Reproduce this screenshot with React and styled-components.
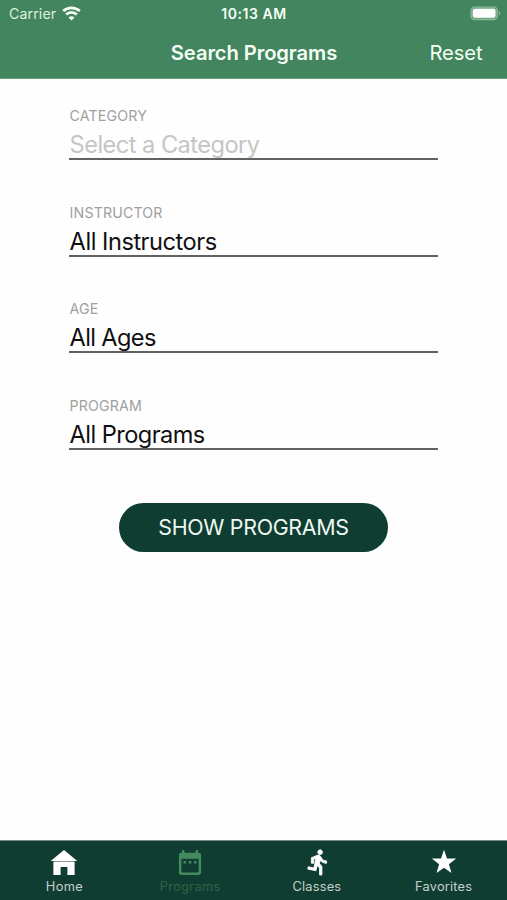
import React from "react";
import styled, { createGlobalStyle } from "styled-components";

const GlobalStyle = createGlobalStyle`
  * { box-sizing: border-box; }
  body { margin: 0; background: #fff; }
`;

const Screen = styled.div`
  width: 100%;
  height: 100vh;
  display: flex;
  flex-direction: column;
  overflow: hidden;
  background: #fefefe;
  font-family: Inter, "Liberation Sans", sans-serif;
  white-space: nowrap;
`;

const Header = styled.header`
  height: 79px;
  flex: none;
  background: #43855e;
  border-bottom: 1px solid #68a07c;
  color: #f3fff4;
`;

const StatusBar = styled.div`
  height: 27px;
  display: grid;
  grid-template-columns: 1fr auto 1fr;
  align-items: center;
  padding: 0 6px 0 9px;
  font-size: 14.2px;
`;

const Carrier = styled.div`
  display: flex;
  align-items: center;
  gap: 6px;
  letter-spacing: 0.1px;
  color: #dcf2df;
`;

const Clock = styled.div`
  margin-right: 2px;
  font-size: 14px;
  font-weight: 600;
  letter-spacing: 0.55px;
`;

const BatterySlot = styled.div`
  display: flex;
  justify-content: flex-end;
`;

const NavBar = styled.div`
  height: 51px;
  display: grid;
  grid-template-columns: 1fr auto 1fr;
  align-items: center;
  padding: 0 24.5px 0 25.5px;
`;

const Title = styled.h1`
  grid-column: 2;
  margin: 0;
  font-size: 20.2px;
  line-height: 30px;
  font-weight: 600;
  letter-spacing: -0.1px;
`;

const ResetButton = styled.button`
  justify-self: end;
  padding: 0;
  border: 0;
  background: none;
  color: inherit;
  font: 400 20.2px/30px Inter, sans-serif;
  letter-spacing: -0.1px;
`;

const Form = styled.main`
  flex: 1;
  padding: 26px 69px 0;
`;

const Field = styled.div`
  height: 96.5px;
`;

const FieldLabel = styled.div`
  height: 22px;
  padding-left: 0.6px;
  font-size: 14.2px;
  line-height: 21px;
  letter-spacing: 0.15px;
  color: #a0a0a0;
`;

const FieldValue = styled.div`
  height: 33px;
  padding-left: 0.6px;
  border-bottom: 2px solid #626262;
  font-size: 23.6px;
  line-height: 36px;
  letter-spacing: ${(p) => p.$spacing}px;
  color: ${(p) => (p.$empty ? "#c5c5c5" : "#101010")};
`;

const SubmitButton = styled.button`
  display: block;
  width: 269px;
  height: 49px;
  margin: 12px auto 0;
  padding: 0;
  border: 0;
  border-radius: 25px;
  background: #103d31;
  color: #edf8f3;
  font: 400 21.4px/49px Inter, sans-serif;
  letter-spacing: -0.3px;
`;

const TabBar = styled.nav`
  height: 60px;
  flex: none;
  display: grid;
  grid-template-columns: repeat(4, 1fr);
  background: #103d31;
  border-top: 1px solid #708b82;
`;

const Tab = styled.div`
  display: flex;
  flex-direction: column;
  align-items: center;
  padding-top: 7px;
  padding-left: ${(p) => p.$nudge || 0}px;
  color: ${(p) => (p.$active ? "#438b5e" : "#fff")};
`;

const TabLabel = styled.span`
  font-size: 12.8px;
  line-height: 16px;
  margin-top: 3px;
  letter-spacing: ${(p) => p.$spacing}px;
  color: ${(p) => (p.$active ? "#2d6448" : "#c5d1cb")};
`;

const WifiIcon = () => (
  <svg width="19" height="15" viewBox="0 0 19 15" fill="none" stroke="#f5fff5" strokeWidth="2.7">
    <path d="M1.2 5.1C5.9.7 13.1.7 17.8 5.1" />
    <path d="M4.1 8.6c3.1-2.9 7.7-2.9 10.8 0" />
    <path d="M9.5 14.4 6.5 11.4c1.7-1.6 4.3-1.6 6 0Z" fill="#f5fff5" stroke="none" />
  </svg>
);

const BatteryIcon = () => (
  <svg width="31" height="15" viewBox="0 0 31 15">
    <rect x="1" y="1" width="26.5" height="12.6" rx="3.7" fill="#6fa583" stroke="#8cba99" strokeWidth="1.2" />
    <rect x="2.8" y="2.8" width="22.7" height="9" rx="2" fill="#fff" />
    <path d="M29 5v4.5c1.8-.7 1.8-3.8 0-4.5Z" fill="#8cba99" />
  </svg>
);

const HomeIcon = () => (
  <svg width="28" height="28" viewBox="0 0 28 28" fill="currentColor">
    <path d="M14 2 27.3 13H.7ZM3.4 13.6h21.2V27h-7.2v-8h-6.8v8H3.4Z" />
  </svg>
);

const CalendarIcon = () => (
  <svg width="28" height="28" viewBox="0 0 28 28" fill="currentColor">
    <path
      fillRule="evenodd"
      d="M6 2.8q0-.8.8-.8h.9q.8 0 .8.8v2h11v-2q0-.8.8-.8h.9q.8 0 .8.8v2h.7q2.4 0 2.4 2.4v17.4q0 2.4-2.4 2.4H5.3q-2.4 0-2.4-2.4V7.2q0-2.4 2.4-2.4H6ZM5.4 10.7v12.8q0 1 1 1h15.2q1 0 1-1V10.7Z"
    />
    <path d="M7.6 13h2.5v2.5H7.6ZM12.8 13h2.5v2.5h-2.5ZM18 13h2.5v2.5H18Z" />
  </svg>
);

const RunnerIcon = () => (
  <svg width="28" height="28" viewBox="0 0 24 24" fill="currentColor" stroke="currentColor" strokeWidth=".75">
    <path
      transform="translate(1.2 .1)"
      d="M13.49 5.48c1.1 0 2-.9 2-2s-.9-2-2-2-2 .9-2 2 .9 2 2 2zm-3.6 13.9 1-4.4 2.1 2v6h2v-7.5l-2.1-2 .6-3c1.3 1.5 3.3 2.5 5.5 2.5v-2c-1.9 0-3.5-1-4.3-2.4l-1-1.6c-.4-.6-1-1-1.7-1-.3 0-.5.1-.8.1l-5.2 2.2v4.7h2v-3.4l1.8-.7-1.6 8.1-4.9-1-.4 2 7 1.4z"
    />
  </svg>
);

const StarIcon = () => (
  <svg width="28" height="28" viewBox="0 0 28 28" fill="currentColor">
    <path d="m14 1.7 3 8.7 9.2.2-7.3 5.6 2.6 8.8-7.5-5.2L6.5 25l2.6-8.8-7.3-5.6 9.2-.2Z" />
  </svg>
);

const fields = [
  { label: "CATEGORY", value: "Select a Category", empty: true, spacing: -0.53 },
  { label: "INSTRUCTOR", value: "All Instructors", spacing: -0.47 },
  { label: "AGE", value: "All Ages", spacing: -0.65 },
  { label: "PROGRAM", value: "All Programs", spacing: -0.55 },
];

const tabs = [
  { label: "Home", Icon: HomeIcon, spacing: 0.3, nudge: 2 },
  { label: "Programs", Icon: CalendarIcon, active: true, spacing: 0.3 },
  { label: "Classes", Icon: RunnerIcon, spacing: 0.2 },
  { label: "Favorites", Icon: StarIcon, spacing: 0.2 },
];

export default function App() {
  return (
    <>
      <GlobalStyle />
      <Screen>
        <Header>
          <StatusBar>
            <Carrier>Carrier <WifiIcon /></Carrier>
            <Clock>10:13 AM</Clock>
            <BatterySlot><BatteryIcon /></BatterySlot>
          </StatusBar>
          <NavBar>
            <Title>Search Programs</Title>
            <ResetButton>Reset</ResetButton>
          </NavBar>
        </Header>
        <Form>
          {fields.map((f) => (
            <Field key={f.label}>
              <FieldLabel>{f.label}</FieldLabel>
              <FieldValue $empty={f.empty} $spacing={f.spacing}>{f.value}</FieldValue>
            </Field>
          ))}
          <SubmitButton>SHOW PROGRAMS</SubmitButton>
        </Form>
        <TabBar>
          {tabs.map(({ label, Icon, active, spacing, nudge }) => (
            <Tab key={label} $active={active} $nudge={nudge}>
              <Icon />
              <TabLabel $active={active} $spacing={spacing}>{label}</TabLabel>
            </Tab>
          ))}
        </TabBar>
      </Screen>
    </>
  );
}
